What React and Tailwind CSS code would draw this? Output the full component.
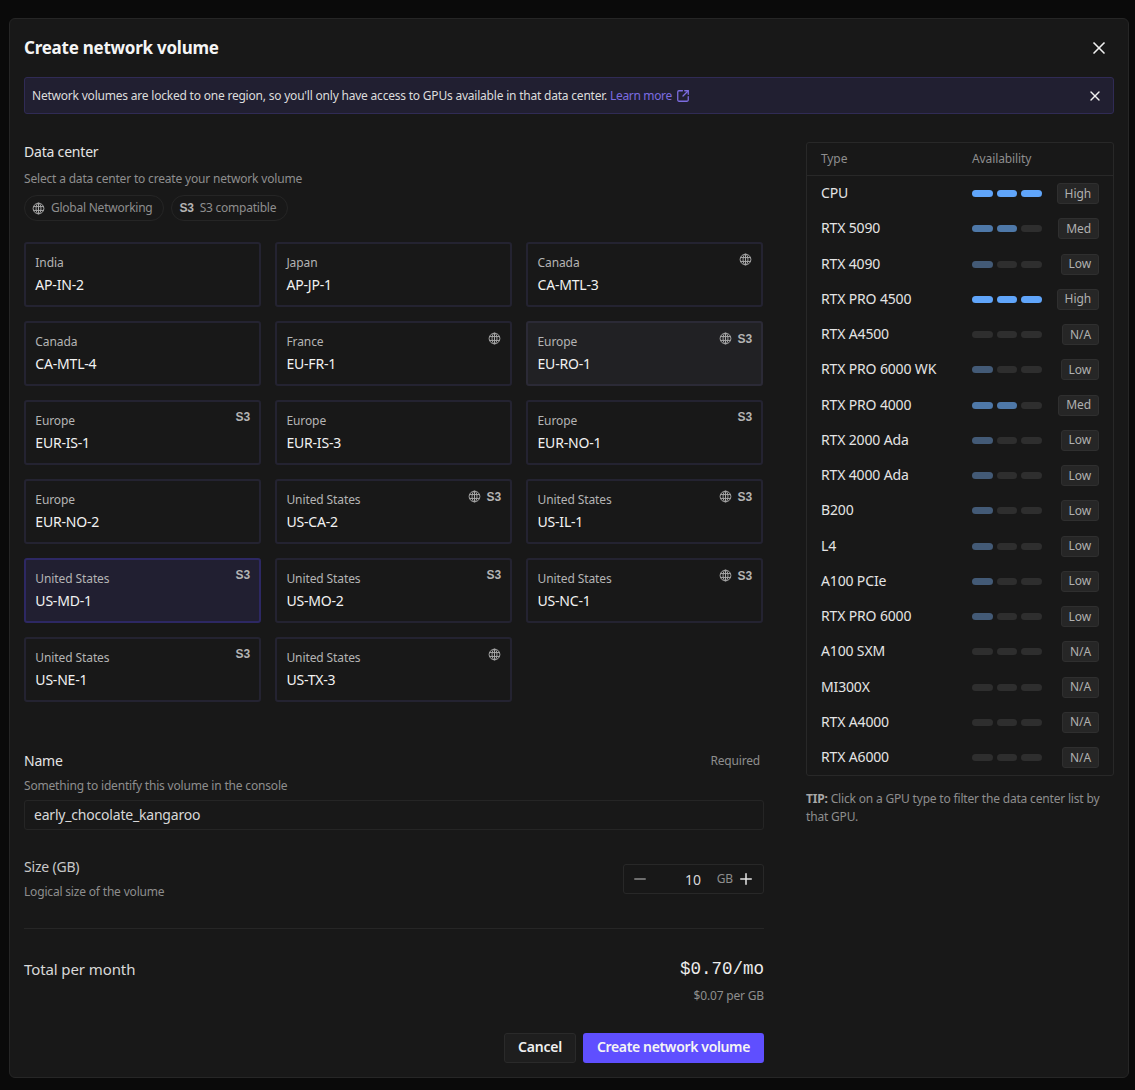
import React from "react";
import { X, Minus, Plus, SquareArrowOutUpRight } from "lucide-react";

const S3 = ({ className = "" }) => (
  <span className={"font-['Liberation_Sans',sans-serif] font-bold text-[12px] leading-none text-[#b4b4b4] " + className}>S3</span>
);

const Globe = ({ size = 13 }) => (
  <svg width={size} height={size} viewBox="0 0 16 16" fill="none" stroke="#a8a8a8" strokeWidth="1.2">
    <circle cx="8" cy="8" r="6.6" />
    <ellipse cx="8" cy="8" rx="3" ry="6.6" />
    <path d="M1.6 5.6h12.8M1.6 10.4h12.8M8 1.4v13.2" />
  </svg>
);

const centers = [
  ["India", "AP-IN-2", 0, 0],
  ["Japan", "AP-JP-1", 0, 0],
  ["Canada", "CA-MTL-3", 1, 0],
  ["Canada", "CA-MTL-4", 0, 0],
  ["France", "EU-FR-1", 1, 0],
  ["Europe", "EU-RO-1", 1, 1, "hover"],
  ["Europe", "EUR-IS-1", 0, 1],
  ["Europe", "EUR-IS-3", 0, 0],
  ["Europe", "EUR-NO-1", 0, 1],
  ["Europe", "EUR-NO-2", 0, 0],
  ["United States", "US-CA-2", 1, 1],
  ["United States", "US-IL-1", 1, 1],
  ["United States", "US-MD-1", 0, 1, "selected"],
  ["United States", "US-MO-2", 0, 1],
  ["United States", "US-NC-1", 1, 1],
  ["United States", "US-NE-1", 0, 1],
  ["United States", "US-TX-3", 1, 0],
];

const gpus = [
  ["CPU", "High"],
  ["RTX 5090", "Med"],
  ["RTX 4090", "Low"],
  ["RTX PRO 4500", "High"],
  ["RTX A4500", "N/A"],
  ["RTX PRO 6000 WK", "Low"],
  ["RTX PRO 4000", "Med"],
  ["RTX 2000 Ada", "Low"],
  ["RTX 4000 Ada", "Low"],
  ["B200", "Low"],
  ["L4", "Low"],
  ["A100 PCIe", "Low"],
  ["RTX PRO 6000", "Low"],
  ["A100 SXM", "N/A"],
  ["MI300X", "N/A"],
  ["RTX A4000", "N/A"],
  ["RTX A6000", "N/A"],
];

const levels = {
  High: ["bg-[#60a5fa]", "bg-[#60a5fa]", "bg-[#60a5fa]"],
  Med: ["bg-[#4e78a8]", "bg-[#4e78a8]", "bg-[#2e2e2e]"],
  Low: ["bg-[#435a76]", "bg-[#2e2e2e]", "bg-[#2e2e2e]"],
  "N/A": ["bg-[#2e2e2e]", "bg-[#2e2e2e]", "bg-[#2e2e2e]"],
};

function Card({ region, code, globe, s3, state }) {
  const tone =
    state === "selected"
      ? "bg-[#211f31] border-[#2d2863]"
      : state === "hover"
      ? "bg-[#212124] border-[#2b2a36]"
      : "bg-[#181818] border-[#242331]";
  return (
    <div className={"relative h-[65px] rounded-[3px] border-2 px-[9.35px] pt-[10px] " + tone}>
      <div className="text-[12px] leading-[18px] tracking-[-0.1px] text-[#b4b4b4]">{region}</div>
      <div className="mt-[4px] text-[14px] leading-[18px] tracking-[-0.2px] text-[#f2f2f2]">{code}</div>
      <div className="absolute right-[9px] top-[9px] flex items-center gap-[6px]">
        {globe ? <Globe /> : null}
        {s3 ? <S3 /> : null}
      </div>
    </div>
  );
}

function Row({ name, level }) {
  const bars = levels[level];
  return (
    <div className="flex h-[35.25px] items-center pl-[14px] pr-[14px]">
      <div className="mt-[-2px] w-[151px] text-[14px] tracking-[-0.15px] text-[#e4e4e4]">{name}</div>
      <div className="flex gap-[4px]">
        <div className={"h-[7px] w-[21px] rounded-full " + bars[0]} />
        <div className={"h-[7px] w-[20px] rounded-full " + bars[1]} />
        <div className={"h-[7px] w-[21px] rounded-full " + bars[2]} />
      </div>
      <div className="ml-auto flex h-[21px] items-center rounded-[3px] border border-[#2f2f2f] bg-[#262626] px-[7px] text-[12px] tracking-[-0.1px] text-[#b0b0b0]">
        {level}
      </div>
    </div>
  );
}

export default function App() {
  return (
    <div className="h-[1090px] overflow-hidden bg-[#0a0a0a] pl-[9px] pt-[18px] font-['Noto_Sans',sans-serif]">
      <div className="h-[1060px] w-[1120px] rounded-[6px] border border-[#262626] bg-[#181818] px-[14px]">
        <div className="flex h-[58px] items-center justify-between">
          <h2 className="text-[17px] font-bold tracking-[-0.25px] text-[#f5f5f5]">Create network volume</h2>
          <X size={20} className="mr-[5px] text-[#f0f0f0]" />
        </div>

        <div className="flex h-[37px] items-center justify-between rounded-[3px] border border-[#302b55] bg-[#211f31] pl-[7px] pr-[10px]">
          <div className="flex items-center text-[12px] tracking-[-0.21px] text-[#dcdcdc]">
            Network volumes are locked to one region, so you'll only have access to GPUs available in that data center.
            <span className="ml-[3px] tracking-[-0.35px] text-[#7c6ce0]">Learn more</span>
            <SquareArrowOutUpRight size={14} strokeWidth={2.2} className="ml-[4px] text-[#7c6ce0]" />
          </div>
          <X size={16} className="text-[#f0f0f0]" />
        </div>

        <div className="mt-[28px] flex justify-between">
          <div className="w-[740px]">
            <div className="text-[14px] leading-[20px] tracking-[-0.2px] text-[#e4e4e4]">Data center</div>
            <div className="mt-[8px] text-[12px] leading-[18px] tracking-[-0.18px] text-[#8e8e8e]">
              Select a data center to create your network volume
            </div>
            <div className="mt-[7px] flex gap-[7px]">
              <div className="flex h-[26px] items-center gap-[6px] rounded-full border border-[#252525] pl-[7px] pr-[10px] text-[12px] tracking-[-0.24px] text-[#8e8e8e]">
                <Globe size={13} />
                <span>Global Networking</span>
              </div>
              <div className="flex h-[26px] items-center gap-[6px] rounded-full border border-[#252525] pl-[8px] pr-[11px] text-[12px] tracking-[-0.24px] text-[#8e8e8e]">
                <S3 />
                <span>S3 compatible</span>
              </div>
            </div>

            <div className="mt-[21px] grid w-[739.3px] grid-cols-3 gap-[14px]">
              {centers.map(([region, code, globe, s3, state]) => (
                <Card key={code} region={region} code={code} globe={globe} s3={s3} state={state} />
              ))}
            </div>

            <div className="mt-[49px] flex items-center justify-between">
              <span className="text-[14px] leading-[20px] tracking-[-0.2px] text-[#e4e4e4]">Name</span>
              <span className="mr-[4px] text-[12px] tracking-[-0.18px] text-[#8e8e8e]">Required</span>
            </div>
            <div className="mt-[6px] text-[12px] leading-[18px] tracking-[-0.18px] text-[#8e8e8e]">
              Something to identify this volume in the console
            </div>
            <div className="mt-[5px] flex h-[30px] items-center rounded-[3px] border border-[#252525] px-[9px] pb-[1px] text-[14px] tracking-[-0.2px] text-[#d8d8d8]">
              early_chocolate_kangaroo
            </div>

            <div className="mt-[27px] flex items-start justify-between">
              <div>
                <div className="text-[14px] leading-[20px] tracking-[-0.2px] text-[#c8c8c8]">Size (GB)</div>
                <div className="mt-[6px] text-[12px] leading-[18px] tracking-[-0.18px] text-[#8e8e8e]">Logical size of the volume</div>
              </div>
              <div className="mt-[7px] flex h-[30px] w-[141px] items-center rounded-[3px] border border-[#282828] pl-[7px] pr-[8px]">
                <Minus size={18} strokeWidth={1.8} className="text-[#8a8a8a]" />
                <span className="ml-auto text-[14px] tracking-[-0.2px] text-[#d8d8d8]">10</span>
                <span className="ml-[16px] text-[12px] tracking-[-0.12px] text-[#8e8e8e]">GB</span>
                <Plus size={18} strokeWidth={2} className="ml-[4px] text-[#e4e4e4]" />
              </div>
            </div>

            <div className="mt-[27px] border-t border-[#262626]" />

            <div className="mt-[28px] flex items-start justify-between">
              <div className="text-[15px] leading-[24px] tracking-[-0.1px] text-[#d8d8d8]">Total per month</div>
              <div className="font-['Liberation_Mono',monospace] text-[17.5px] leading-[24px] text-[#ececec]">$0.70/mo</div>
            </div>
            <div className="mt-[6px] text-right text-[12px] leading-[18px] tracking-[-0.18px] text-[#8e8e8e]">$0.07 per GB</div>

            <div className="mt-[28px] flex justify-end gap-[7px]">
              <button className="h-[30px] w-[72px] rounded-[3px] border border-[#2a2a2a] bg-[#1e1e1e] pb-[3px] text-[14px] font-semibold tracking-[-0.2px] text-[#f0f0f0]">
                Cancel
              </button>
              <button className="h-[30px] w-[181px] rounded-[3px] bg-[#5f4fff] pb-[3px] text-[14px] font-semibold tracking-[-0.35px] text-[#f5f5f5]">
                Create network volume
              </button>
            </div>
          </div>

          <div className="w-[308px]">
            <div className="rounded-[3px] border border-[#282828]">
              <div className="flex h-[33px] items-center border-b border-[#282828] pl-[14px] text-[12px] tracking-[-0.1px] text-[#8e8e8e]">
                <span className="w-[151px]">Type</span>
                <span>Availability</span>
              </div>
              {gpus.map(([name, level]) => (
                <Row key={name} name={name} level={level} />
              ))}
            </div>
            <div className="mt-[14px] text-[12px] leading-[18px] tracking-[-0.18px] text-[#8e8e8e]">
              <b className="font-bold text-[#a8a8a8]">TIP:</b> Click on a GPU type to filter the data center list by that GPU.
            </div>
          </div>
        </div>
      </div>
    </div>
  );
}
